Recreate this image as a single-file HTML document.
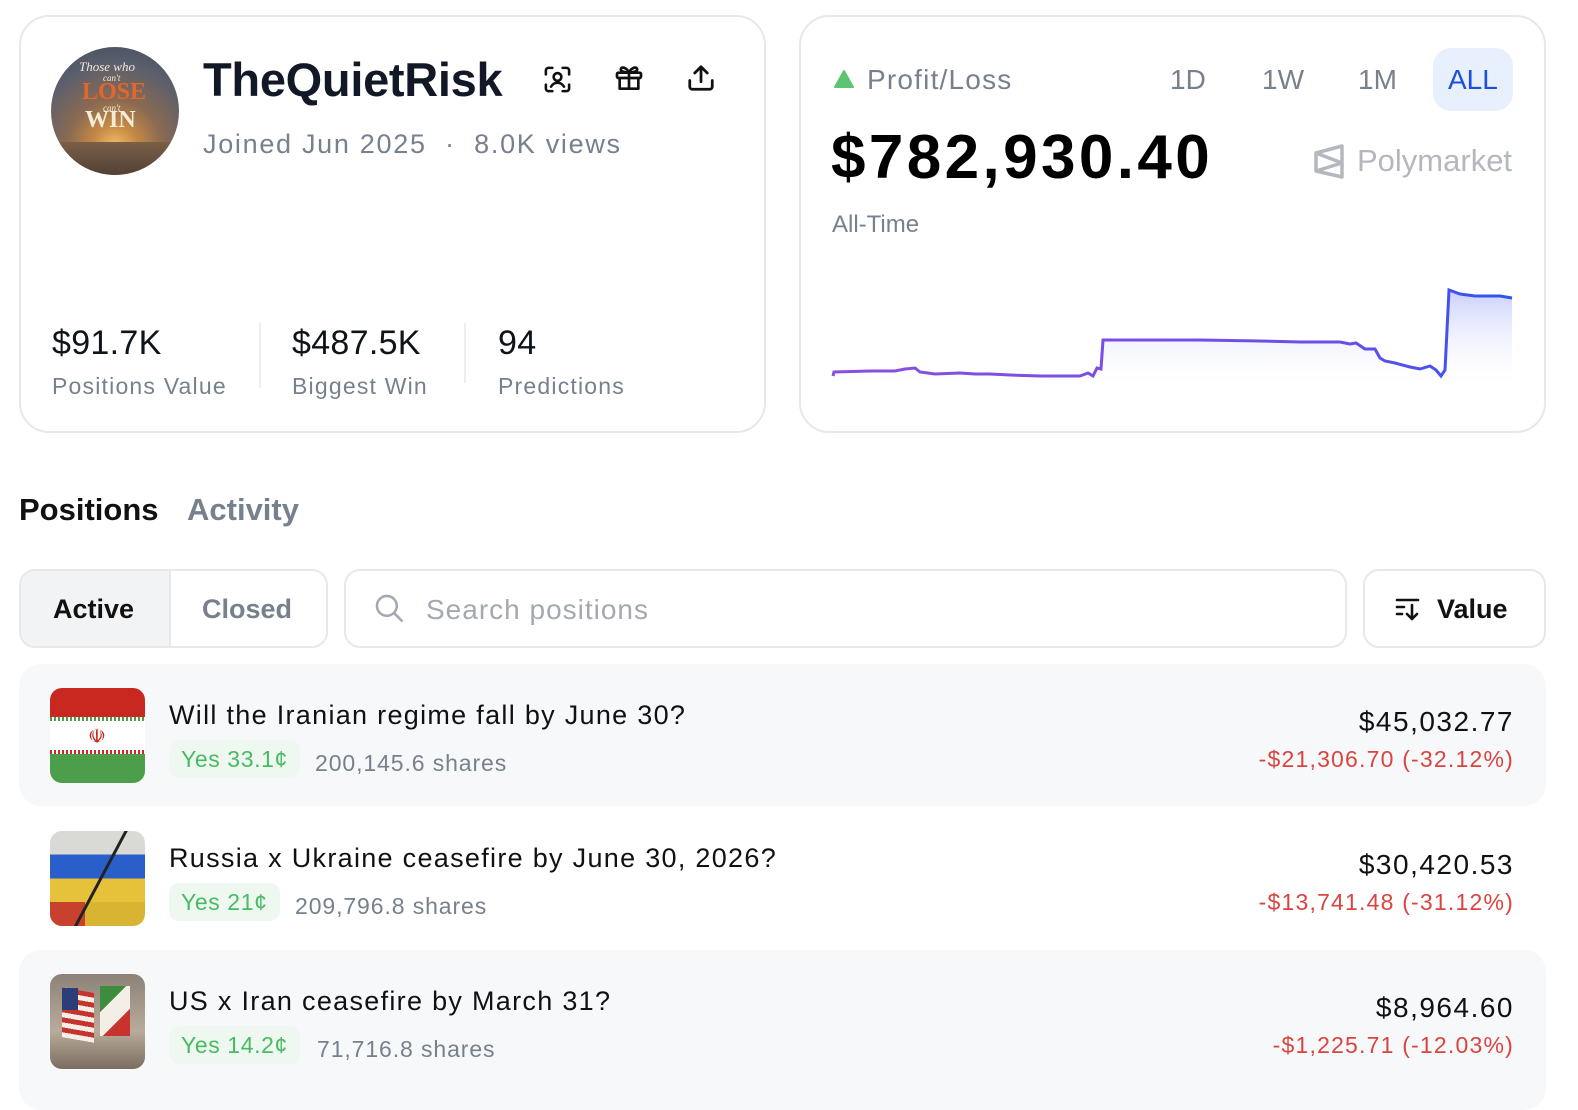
<!DOCTYPE html>
<html><head><meta charset="utf-8">
<style>
*{margin:0;padding:0;box-sizing:border-box}
body{width:1578px;height:1094px;background:#fff;font-family:"Liberation Sans","DejaVu Sans",sans-serif;position:relative;overflow:hidden;color:#0f1419}
.a{position:absolute;white-space:nowrap}
.card{position:absolute;border:2px solid #e6e8eb;border-radius:30px;background:#fff}
.gray{color:#77808d}
.lbl{font-size:23px;color:#77808d;letter-spacing:1.2px}
.val{font-size:34px;color:#0f1419;letter-spacing:0.3px}
.pill{position:absolute;background:#eef8f0;color:#48bb62;border-radius:10px;font-size:23px;height:38px;line-height:38px;padding:0 12px;letter-spacing:0.6px}
.title{font-size:27px;color:#111;letter-spacing:1.3px}
.shares{font-size:23px;color:#77808d;letter-spacing:0.9px}
.rv{font-size:28px;color:#111;text-align:right;right:64px;letter-spacing:1.5px}
.rp{font-size:23px;color:#d9443f;text-align:right;right:64px;letter-spacing:1.2px}
.row{position:absolute;left:19px;width:1527px;background:#f7f8fa;border-radius:22px}
.thumb{position:absolute;left:50px;width:95px;height:95px;border-radius:12px;overflow:hidden}
</style></head><body>

<div class="card" style="left:19px;top:15px;width:747px;height:418px"></div>
<div class="card" style="left:799px;top:15px;width:747px;height:418px"></div>

<div class="a" style="left:51px;top:47px;width:128px;height:128px;border-radius:50%;background:radial-gradient(circle at 50% 78%,#f3c06a 0%,#c88a45 18%,#8a6a52 40%,#5b5f6d 70%,#3e4a5c 100%);overflow:hidden">
 <div class="a" style="left:0;top:95px;width:128px;height:40px;background:linear-gradient(#7a5f48,#4a3b31)"></div>
 <div class="a" style="left:28px;top:12px;font:italic 13px 'Liberation Serif',serif;color:#f4ead8">Those who</div>
 <div class="a" style="left:52px;top:26px;font:italic 9px 'Liberation Serif',serif;color:#f4ead8">can't</div>
 <div class="a" style="left:31px;top:32px;font:bold 24px 'Liberation Serif',serif;color:#e3672a">LOSE</div>
 <div class="a" style="left:52px;top:56px;font:italic 9px 'Liberation Serif',serif;color:#f4ead8">can't</div>
 <div class="a" style="left:34px;top:60px;font:bold 24px 'Liberation Serif',serif;color:#f5ecd8">WIN</div>
</div>

<div class="a" style="left:203px;top:52px;font-size:47px;font-weight:bold;color:#121826;letter-spacing:-0.3px">TheQuietRisk</div>
<div class="a gray" style="left:203px;top:129px;font-size:27px;letter-spacing:1.7px">Joined Jun 2025 &nbsp;·&nbsp; 8.0K views</div>

<svg class="a" style="left:542px;top:64px" width="31" height="31" viewBox="0 0 24 24" fill="none" stroke="#111" stroke-width="2" stroke-linecap="round"><path d="M3 8V5a2 2 0 0 1 2-2h3M16 3h3a2 2 0 0 1 2 2v3M21 16v3a2 2 0 0 1-2 2h-3M8 21H5a2 2 0 0 1-2-2v-3"/><circle cx="12" cy="10" r="3"/><path d="M7 17.5c1.2-2 3-3 5-3s3.8 1 5 3"/></svg>
<svg class="a" style="left:613px;top:62px" width="32" height="32" viewBox="0 0 24 24" fill="none" stroke="#111" stroke-width="2" stroke-linejoin="round"><rect x="3" y="8" width="18" height="4" rx="1"/><path d="M5 12v8h14v-8M12 8v12M12 8c-1-3-5-5-6-3s3 3 6 3zM12 8c1-3 5-5 6-3s-3 3-6 3z"/></svg>
<svg class="a" style="left:686px;top:63px" width="30" height="30" viewBox="0 0 24 24" fill="none" stroke="#111" stroke-width="2.2" stroke-linecap="round" stroke-linejoin="round"><path d="M12 15V3M7 8l5-5 5 5M3 14v5a2 2 0 0 0 2 2h14a2 2 0 0 0 2-2v-5"/></svg>

<div class="a val" style="left:52px;top:324px">$91.7K</div>
<div class="a lbl" style="left:52px;top:373px">Positions Value</div>
<div class="a" style="left:259px;top:323px;width:2px;height:65px;background:#eceef0"></div>
<div class="a val" style="left:292px;top:324px">$487.5K</div>
<div class="a lbl" style="left:292px;top:373px">Biggest Win</div>
<div class="a" style="left:464px;top:323px;width:2px;height:60px;background:#eceef0"></div>
<div class="a val" style="left:498px;top:324px">94</div>
<div class="a lbl" style="left:498px;top:373px">Predictions</div>

<svg class="a" style="left:834px;top:70px" width="20" height="18" viewBox="0 0 20 18"><path d="M10 1 L19 17 L1 17 Z" fill="#5fc46f" stroke="#5fc46f" stroke-width="2" stroke-linejoin="round"/></svg>
<div class="a gray" style="left:867px;top:64px;font-size:28px;letter-spacing:1.2px">Profit/Loss</div>
<div class="a gray" style="left:1170px;top:64px;font-size:28px">1D</div>
<div class="a gray" style="left:1262px;top:64px;font-size:28px">1W</div>
<div class="a gray" style="left:1358px;top:64px;font-size:28px">1M</div>
<div class="a" style="left:1433px;top:48px;width:80px;height:63px;border-radius:18px;background:#e8effd"></div>
<div class="a" style="left:1448px;top:64px;font-size:28px;color:#1a4fe0">ALL</div>
<div class="a" style="left:831px;top:122px;font-size:62px;font-weight:bold;color:#000;letter-spacing:3.4px">$782,930.40</div>
<svg class="a" style="left:1313px;top:143px" width="32" height="36" viewBox="0 0 32 36" fill="none" stroke="#b4b8be" stroke-width="3.5" stroke-linejoin="round"><path d="M29 3 L3 10 L3 28 L29 34 Z M3 10 L29 20 M3 28 L29 20"/></svg>
<div class="a" style="left:1357px;top:143px;font-size:31px;color:#b4b8be">Polymarket</div>
<div class="a gray" style="left:832px;top:211px;font-size:24px">All-Time</div>

<svg class="a" style="left:828px;top:280px" width="690" height="110" viewBox="828 280 690 110">
<defs>
<linearGradient id="lg" x1="0" x2="1" y1="0" y2="0"><stop offset="0" stop-color="#8b4ee0"/><stop offset="0.75" stop-color="#6a4ee8"/><stop offset="1" stop-color="#2d55ef"/></linearGradient>
<linearGradient id="fg" x1="0" x2="0" y1="0" y2="1"><stop offset="0" stop-color="#c9d0fa"/><stop offset="1" stop-color="#ffffff" stop-opacity="0"/></linearGradient>
</defs>
<path d="M833 376 L834 372 L870 371 L895 371 L905 369 L915 368 L920 372 L935 374 L960 373 L975 374 L990 374 L1010 375 L1040 376 L1080 376 L1088 373 L1093 376 L1097 368 L1101 369 L1103 340 L1140 340 L1200 340 L1260 341 L1300 342 L1340 342 L1350 344 L1356 343 L1365 349 L1375 349 L1380 358 L1385 361 L1395 363 L1410 367 L1420 369 L1430 366 L1436 370 L1441 376 L1445 370 L1449 290 L1460 294 L1475 296 L1500 296 L1512 298 L1512 390 L833 390 Z" fill="url(#fg)"/>
<path d="M833 376 L834 372 L870 371 L895 371 L905 369 L915 368 L920 372 L935 374 L960 373 L975 374 L990 374 L1010 375 L1040 376 L1080 376 L1088 373 L1093 376 L1097 368 L1101 369 L1103 340 L1140 340 L1200 340 L1260 341 L1300 342 L1340 342 L1350 344 L1356 343 L1365 349 L1375 349 L1380 358 L1385 361 L1395 363 L1410 367 L1420 369 L1430 366 L1436 370 L1441 376 L1445 370 L1449 290 L1460 294 L1475 296 L1500 296 L1512 298" fill="none" stroke="url(#lg)" stroke-width="3"/>
</svg>

<div class="a" style="left:19px;top:492px;font-size:31px;font-weight:bold;color:#111">Positions</div>
<div class="a" style="left:187px;top:492px;font-size:31px;font-weight:bold;color:#77808d">Activity</div>

<div class="a" style="left:19px;top:569px;width:309px;height:79px;border:2px solid #e6e8eb;border-radius:16px;overflow:hidden;background:#fff">
 <div class="a" style="left:0;top:0;width:150px;height:79px;background:#f2f3f5;border-right:2px solid #e6e8eb"></div>
</div>
<div class="a" style="left:53px;top:594px;font-size:27px;font-weight:bold;color:#111">Active</div>
<div class="a" style="left:202px;top:594px;font-size:27px;font-weight:bold;color:#77808d">Closed</div>
<div class="a" style="left:344px;top:569px;width:1003px;height:79px;border:2px solid #e6e8eb;border-radius:16px"></div>
<svg class="a" style="left:372px;top:591px" width="34" height="34" viewBox="0 0 24 24" fill="none" stroke="#a4a9b1" stroke-width="1.8" stroke-linecap="round"><circle cx="10.5" cy="10.5" r="7"/><path d="M15.5 15.5 L21 21"/></svg>
<div class="a" style="left:426px;top:594px;font-size:28px;color:#a4a9b1;letter-spacing:1px">Search positions</div>
<div class="a" style="left:1363px;top:569px;width:183px;height:79px;border:2px solid #e6e8eb;border-radius:16px"></div>
<svg class="a" style="left:1395px;top:596px" width="28" height="26" viewBox="0 0 28 26" fill="none" stroke="#111" stroke-width="2.6" stroke-linecap="round" stroke-linejoin="round"><path d="M2 4h21M2 11h7M2 18h5M17 9v14M12 18l5 5 5-5"/></svg>
<div class="a" style="left:1437px;top:594px;font-size:27px;font-weight:bold;color:#111">Value</div>

<div class="row" style="top:664px;height:142px"></div>
<div class="thumb" style="top:688px;background:linear-gradient(#c8281f 0 33%,#fff 33% 67%,#4d9e4a 67%)">
 <div class="a" style="left:0;top:29px;width:95px;height:4px;background:repeating-linear-gradient(90deg,#4d9e4a 0 2px,#fff 2px 4px)"></div>
 <div class="a" style="left:0;top:62px;width:95px;height:4px;background:repeating-linear-gradient(90deg,#c8281f 0 2px,#fff 2px 4px)"></div>
 <div class="a" style="left:38px;top:36px;font-size:20px;color:#c8281f">☫</div>
</div>
<div class="a title" style="left:169px;top:700px">Will the Iranian regime fall by June 30?</div>
<div class="pill" style="left:169px;top:740px">Yes 33.1¢</div>
<div class="a shares" style="left:315px;top:750px">200,145.6 shares</div>
<div class="a rv" style="top:706px">$45,032.77</div>
<div class="a rp" style="top:746px">-$21,306.70 (-32.12%)</div>

<div class="thumb" style="top:831px;background:linear-gradient(#d9d9d6 0 25%,#2a5fcb 25% 50%,#e6c23a 50% 75%,#d8b432 75%)">
 <div class="a" style="left:0;top:71px;width:35px;height:24px;background:#c8412f"></div>
 <div class="a" style="left:48px;top:-10px;width:3px;height:120px;background:#222;transform:rotate(28deg)"></div>
</div>
<div class="a title" style="left:169px;top:843px">Russia x Ukraine ceasefire by June 30, 2026?</div>
<div class="pill" style="left:169px;top:883px">Yes 21¢</div>
<div class="a shares" style="left:295px;top:893px">209,796.8 shares</div>
<div class="a rv" style="top:849px">$30,420.53</div>
<div class="a rp" style="top:889px">-$13,741.48 (-31.12%)</div>

<div class="row" style="top:950px;height:160px"></div>
<div class="thumb" style="top:974px;background:linear-gradient(#8c8278,#b9ab9a 60%,#7a6d60)">
 <div class="a" style="left:12px;top:16px;width:32px;height:50px;background:repeating-linear-gradient(#c7342e 0 5px,#f3efe8 5px 10px);transform:skewY(10deg)"></div>
 <div class="a" style="left:12px;top:14px;width:16px;height:22px;background:#2c3d78"></div>
 <div class="a" style="left:50px;top:12px;width:30px;height:50px;background:linear-gradient(135deg,#3e8d3e 0 33%,#f4efe6 33% 66%,#c7342e 66%)"></div>
</div>
<div class="a title" style="left:169px;top:986px">US x Iran ceasefire by March 31?</div>
<div class="pill" style="left:169px;top:1026px">Yes 14.2¢</div>
<div class="a shares" style="left:317px;top:1036px">71,716.8 shares</div>
<div class="a rv" style="top:992px">$8,964.60</div>
<div class="a rp" style="top:1032px">-$1,225.71 (-12.03%)</div>

</body></html>
